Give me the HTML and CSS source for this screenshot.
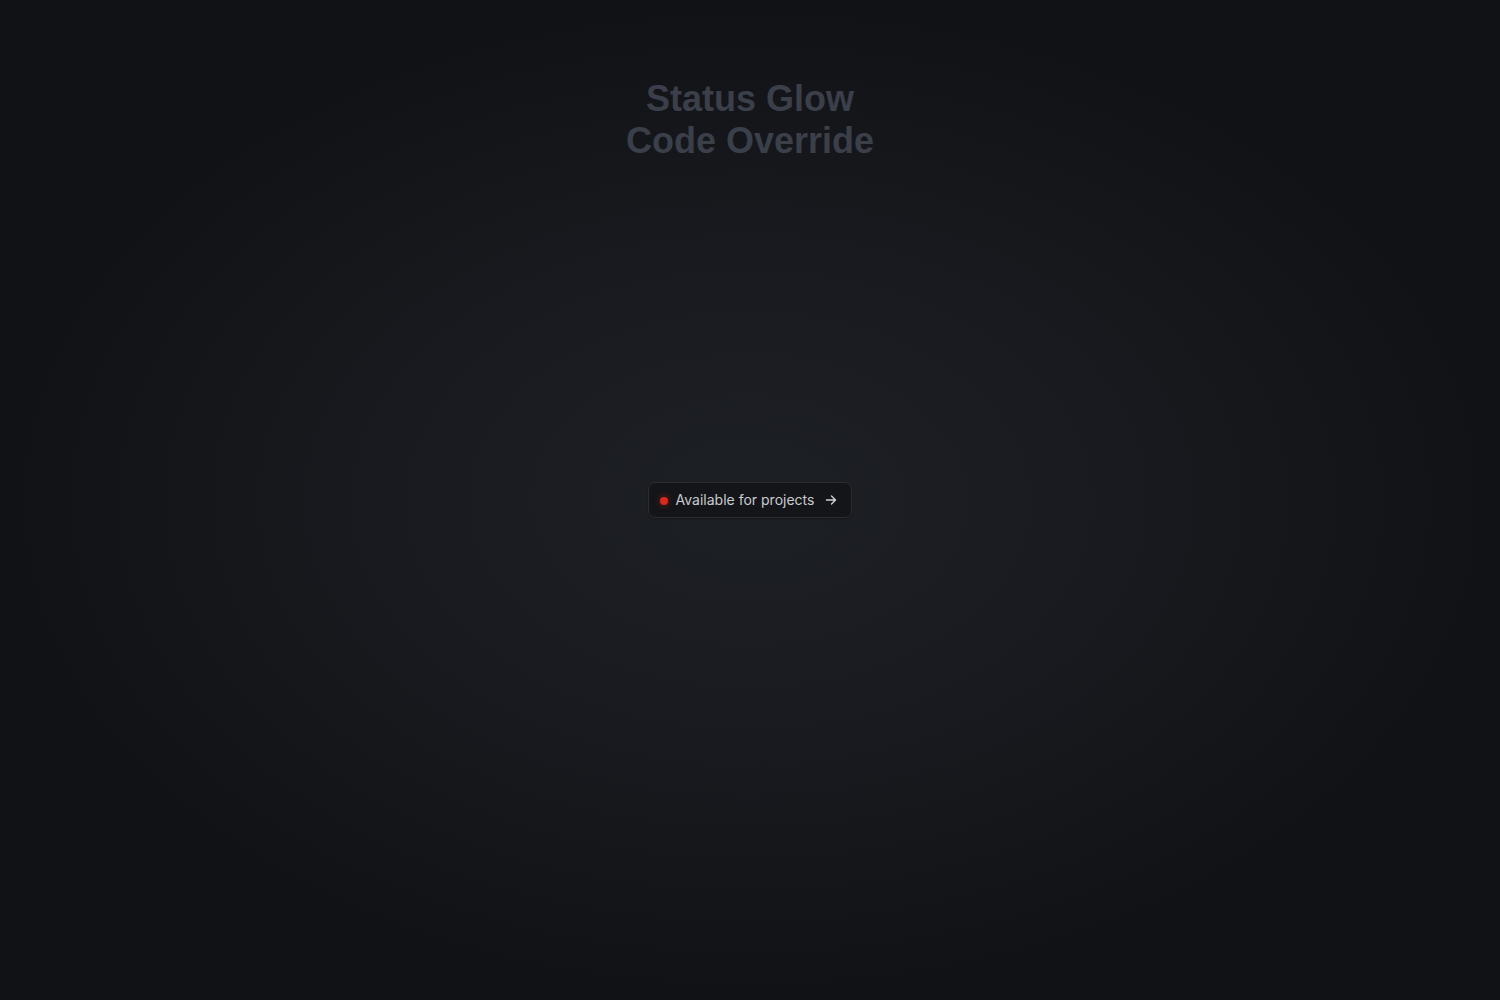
FILE: index.html
```html
<!DOCTYPE html>
<html lang="en">
<head>
<meta charset="utf-8">
<title>Status Glow Code Override</title>
<link rel="stylesheet" href="styles.css">
</head>
<body>
<div class="page">
  <header class="top">
    <h1 class="title">Status Glow<br>Code Override</h1>
  </header>
  <div class="center">
    <a class="pill" href="#">
      <span class="dot"></span>
      <span class="label">Available for projects</span>
      <svg class="arrow" width="14" height="14" viewBox="0 0 14 14" fill="none" stroke="currentColor" stroke-width="1.4" stroke-linecap="round" stroke-linejoin="round"><path d="M2.5 7h9M7.5 3l4 4-4 4"/></svg>
    </a>
  </div>
  <div class="bottom"></div>
</div>
</body>
</html>
```

FILE: styles.css
```css
* { box-sizing: border-box; }
html, body { margin: 0; height: 100%; }
body {
  font-family: Inter, "Noto Sans", sans-serif;
  background: radial-gradient(ellipse 50% 50% at 50% 50%, #1d2025 0%, #181a1f 50%, #111216 100%);
  background-color: #111216;
  color: #c9cbcf;
}
.page {
  height: 100vh;
  display: grid;
  grid-template-rows: 1fr auto 1fr;
  justify-items: center;
}
.top { align-self: start; padding-top: 78px; }
.title {
  margin: 0;
  text-align: center;
  font-family: "Liberation Sans", Arial, sans-serif;
  font-size: 36px;
  line-height: normal;
  font-weight: 700;
  color: #3a3f4a;
}
.center { display: flex; align-items: center; justify-content: center; }
.pill {
  display: inline-flex;
  align-items: center;
  height: 36px;
  padding: 0 13px 0 11px;
  gap: 8px;
  background: #141519;
  border: 1px solid #2b2d31;
  border-radius: 7px;
  text-decoration: none;
  color: #c9cbcf;
  font-size: 14px;
  box-shadow: 0 1px 2px rgba(0,0,0,0.3);
}
.dot {
  width: 8px; height: 8px;
  border-radius: 50%;
  background: #d7291c;
  box-shadow: 0 0 6px rgba(215, 41, 28, 0.55);
  margin-top: 1px;
}
.label { line-height: 20px; margin-right: 2px; margin-bottom: 1px; }
.arrow { color: #d0d2d5; }
```
